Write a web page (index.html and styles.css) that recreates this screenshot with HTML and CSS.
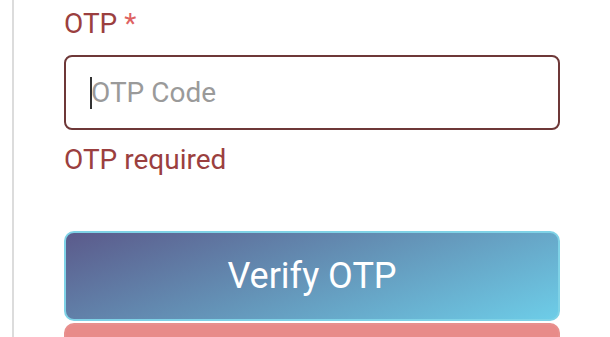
FILE: index.html
```html
<!DOCTYPE html>
<html>
<head>
<meta charset="utf-8">
<link rel="stylesheet" href="styles.css">
</head>
<body>
<div class="panel">
  <form class="form">
    <label class="label">OTP <span class="req">*</span></label>
    <div class="field">
      <span class="caret"></span>
      <span class="placeholder">OTP Code</span>
    </div>
    <div class="error">OTP required</div>
    <button type="button" class="btn btn-primary">Verify OTP</button>
    <button type="button" class="btn btn-secondary" aria-label="Resend OTP"></button>
  </form>
</div>
</body>
</html>
```
FILE: styles.css
```css
html, body {
  margin: 0;
  padding: 0;
  background: #fff;
  height: 100%;
  overflow: hidden;
}
body {
  font-family: Roboto, "Noto Sans", sans-serif;
}
.panel {
  margin-left: 12px;
  border-left: 2px solid #dcdcdc;
  padding-left: 50px;
  height: 100%;
  box-sizing: border-box;
}
.form {
  width: 496px;
  padding-top: 8px;
  display: flex;
  flex-direction: column;
}
.label {
  font-size: 28px;
  line-height: 32px;
  color: #9b3f3f;
}
.req {
  color: #de6262;
}
.field {
  margin-top: 15px;
  height: 75px;
  box-sizing: border-box;
  border: 2px solid #6e3838;
  border-radius: 8px;
  display: flex;
  align-items: center;
  padding-left: 24px;
  background: #fff;
}
.caret {
  width: 2px;
  height: 32px;
  background: #333;
  margin-right: -1px;
}
.placeholder {
  font-size: 28px;
  color: #9a9a9a;
}
.error {
  margin-top: 14px;
  font-size: 28px;
  line-height: 32px;
  color: #9b3f3f;
}
.btn {
  font-family: Roboto, "Noto Sans", sans-serif;
  width: 100%;
  height: 90px;
  box-sizing: border-box;
  border-radius: 10px;
  font-size: 36px;
  color: #fff;
  padding: 0;
}
.btn-primary {
  margin-top: 55px;
  border: 2px solid #7fd2e6;
  background: linear-gradient(160deg, #5b5a8b 0%, #6494b8 50%, #6dcde8 100%);
}
.btn-secondary {
  margin-top: 2px;
  border: 2px solid #e8908e;
  background: #e88b89;
}
```
